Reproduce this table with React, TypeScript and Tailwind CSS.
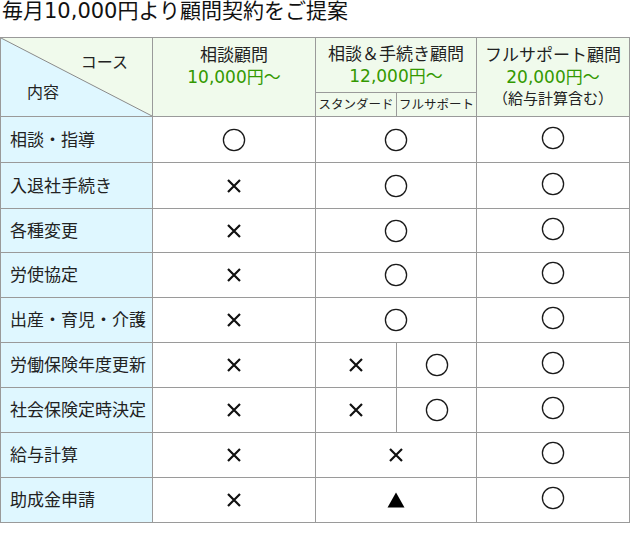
import React from "react";

type Mark = "o" | "x" | "t";

type Row = {
  label: string;
  basic: Mark;
  proc: Mark | [Mark, Mark];
  full: Mark;
  h: string;
};

const rows: Row[] = [
  { label: "相談・指導", basic: "o", proc: "o", full: "o", h: "h-[45px]" },
  { label: "入退社手続き", basic: "x", proc: "o", full: "o", h: "h-[45px]" },
  { label: "各種変更", basic: "x", proc: "o", full: "o", h: "h-[43px]" },
  { label: "労使協定", basic: "x", proc: "o", full: "o", h: "h-[44px]" },
  { label: "出産・育児・介護", basic: "x", proc: "o", full: "o", h: "h-[44px]" },
  { label: "労働保険年度更新", basic: "x", proc: ["x", "o"], full: "o", h: "h-[44px]" },
  { label: "社会保険定時決定", basic: "x", proc: ["x", "o"], full: "o", h: "h-[44px]" },
  { label: "給与計算", basic: "x", proc: "x", full: "o", h: "h-[44px]" },
  { label: "助成金申請", basic: "x", proc: "t", full: "o", h: "h-[44px]" },
];

function Symbol({ mark }: { mark: Mark }) {
  if (mark === "o") {
    return (
      <svg width="24" height="24" viewBox="0 0 24 24">
        <circle cx="12" cy="12" r="10.6" fill="none" stroke="#1a1a1a" strokeWidth="1.3" />
      </svg>
    );
  }
  if (mark === "x") {
    return (
      <svg width="16" height="16" viewBox="0 0 16 16">
        <path d="M2 2 L14 14 M14 2 L2 14" stroke="#111" strokeWidth="2.2" />
      </svg>
    );
  }
  return (
    <svg width="18" height="16" viewBox="0 0 18 16">
      <polygon points="9,0.5 17.5,15.5 0.5,15.5" fill="#000" />
    </svg>
  );
}

function Cell({ mark, extra = "" }: { mark: Mark; extra?: string }) {
  return (
    <div className={`bg-white flex items-center justify-center ${extra}`}>
      <Symbol mark={mark} />
    </div>
  );
}

export default function App() {
  return (
    <div
      className="w-[630px] h-[545px] bg-white text-[#222]"
      style={{ fontFamily: '"DejaVu Sans", "Noto Sans CJK JP", sans-serif' }}
    >
      <div className="h-[37px] pl-[2px] text-[21px] leading-[30px] -mt-[4px] mb-[4px] text-[#111] whitespace-nowrap">
        毎月10,000円より顧問契約をご提案
      </div>

      <div className="grid grid-cols-[151px_162px_80px_79px_152px] gap-px p-px bg-[#9a9a9a] text-[17px] leading-[22px]">
        {/* corner */}
        <div className="row-span-2 relative bg-[#f0faec] h-[78px] flex flex-col justify-between pt-[14px] pb-[12px] text-[16px]">
          <svg className="absolute inset-0" width="151" height="78" viewBox="0 0 151 78">
            <polygon points="0,0 151,78 0,78" fill="#dff7ff" />
            <line x1="0" y1="0" x2="151" y2="78" stroke="#8a8a8a" strokeWidth="1" />
          </svg>
          <span className="relative self-end pr-[24px]">コース</span>
          <span className="relative pl-[26px]">内容</span>
        </div>

        <div className="row-span-2 bg-[#f0faec] text-center pt-[6px]">
          <div>相談顧問</div>
          <div className="text-[#339900]">10,000円～</div>
        </div>

        <div className="col-span-2 h-[54px] bg-[#f0faec] flex flex-col items-center justify-center">
          <div>相談＆手続き顧問</div>
          <div className="text-[#339900]">12,000円～</div>
        </div>

        <div className="row-span-2 bg-[#f0faec] flex flex-col items-center justify-center">
          <div>フルサポート顧問</div>
          <div className="text-[#339900]">20,000円～</div>
          <div className="text-[15px]">（給与計算含む）</div>
        </div>

        <div className="h-[23px] bg-[#f0faec] flex items-center justify-center text-[12.5px] whitespace-nowrap">
          スタンダード
        </div>
        <div className="h-[23px] bg-[#f0faec] flex items-center justify-center text-[12.5px] whitespace-nowrap">
          フルサポート
        </div>

        {rows.map((r) => (
          <React.Fragment key={r.label}>
            <div className={`${r.h} bg-[#dff7ff] flex items-center pl-[9px] whitespace-nowrap`}>{r.label}</div>
            <Cell mark={r.basic} />
            {Array.isArray(r.proc) ? (
              <>
                <Cell mark={r.proc[0]} />
                <Cell mark={r.proc[1]} />
              </>
            ) : (
              <Cell mark={r.proc} extra="col-span-2" />
            )}
            <Cell mark={r.full} extra="pb-[4px]" />
          </React.Fragment>
        ))}
      </div>
    </div>
  );
}
